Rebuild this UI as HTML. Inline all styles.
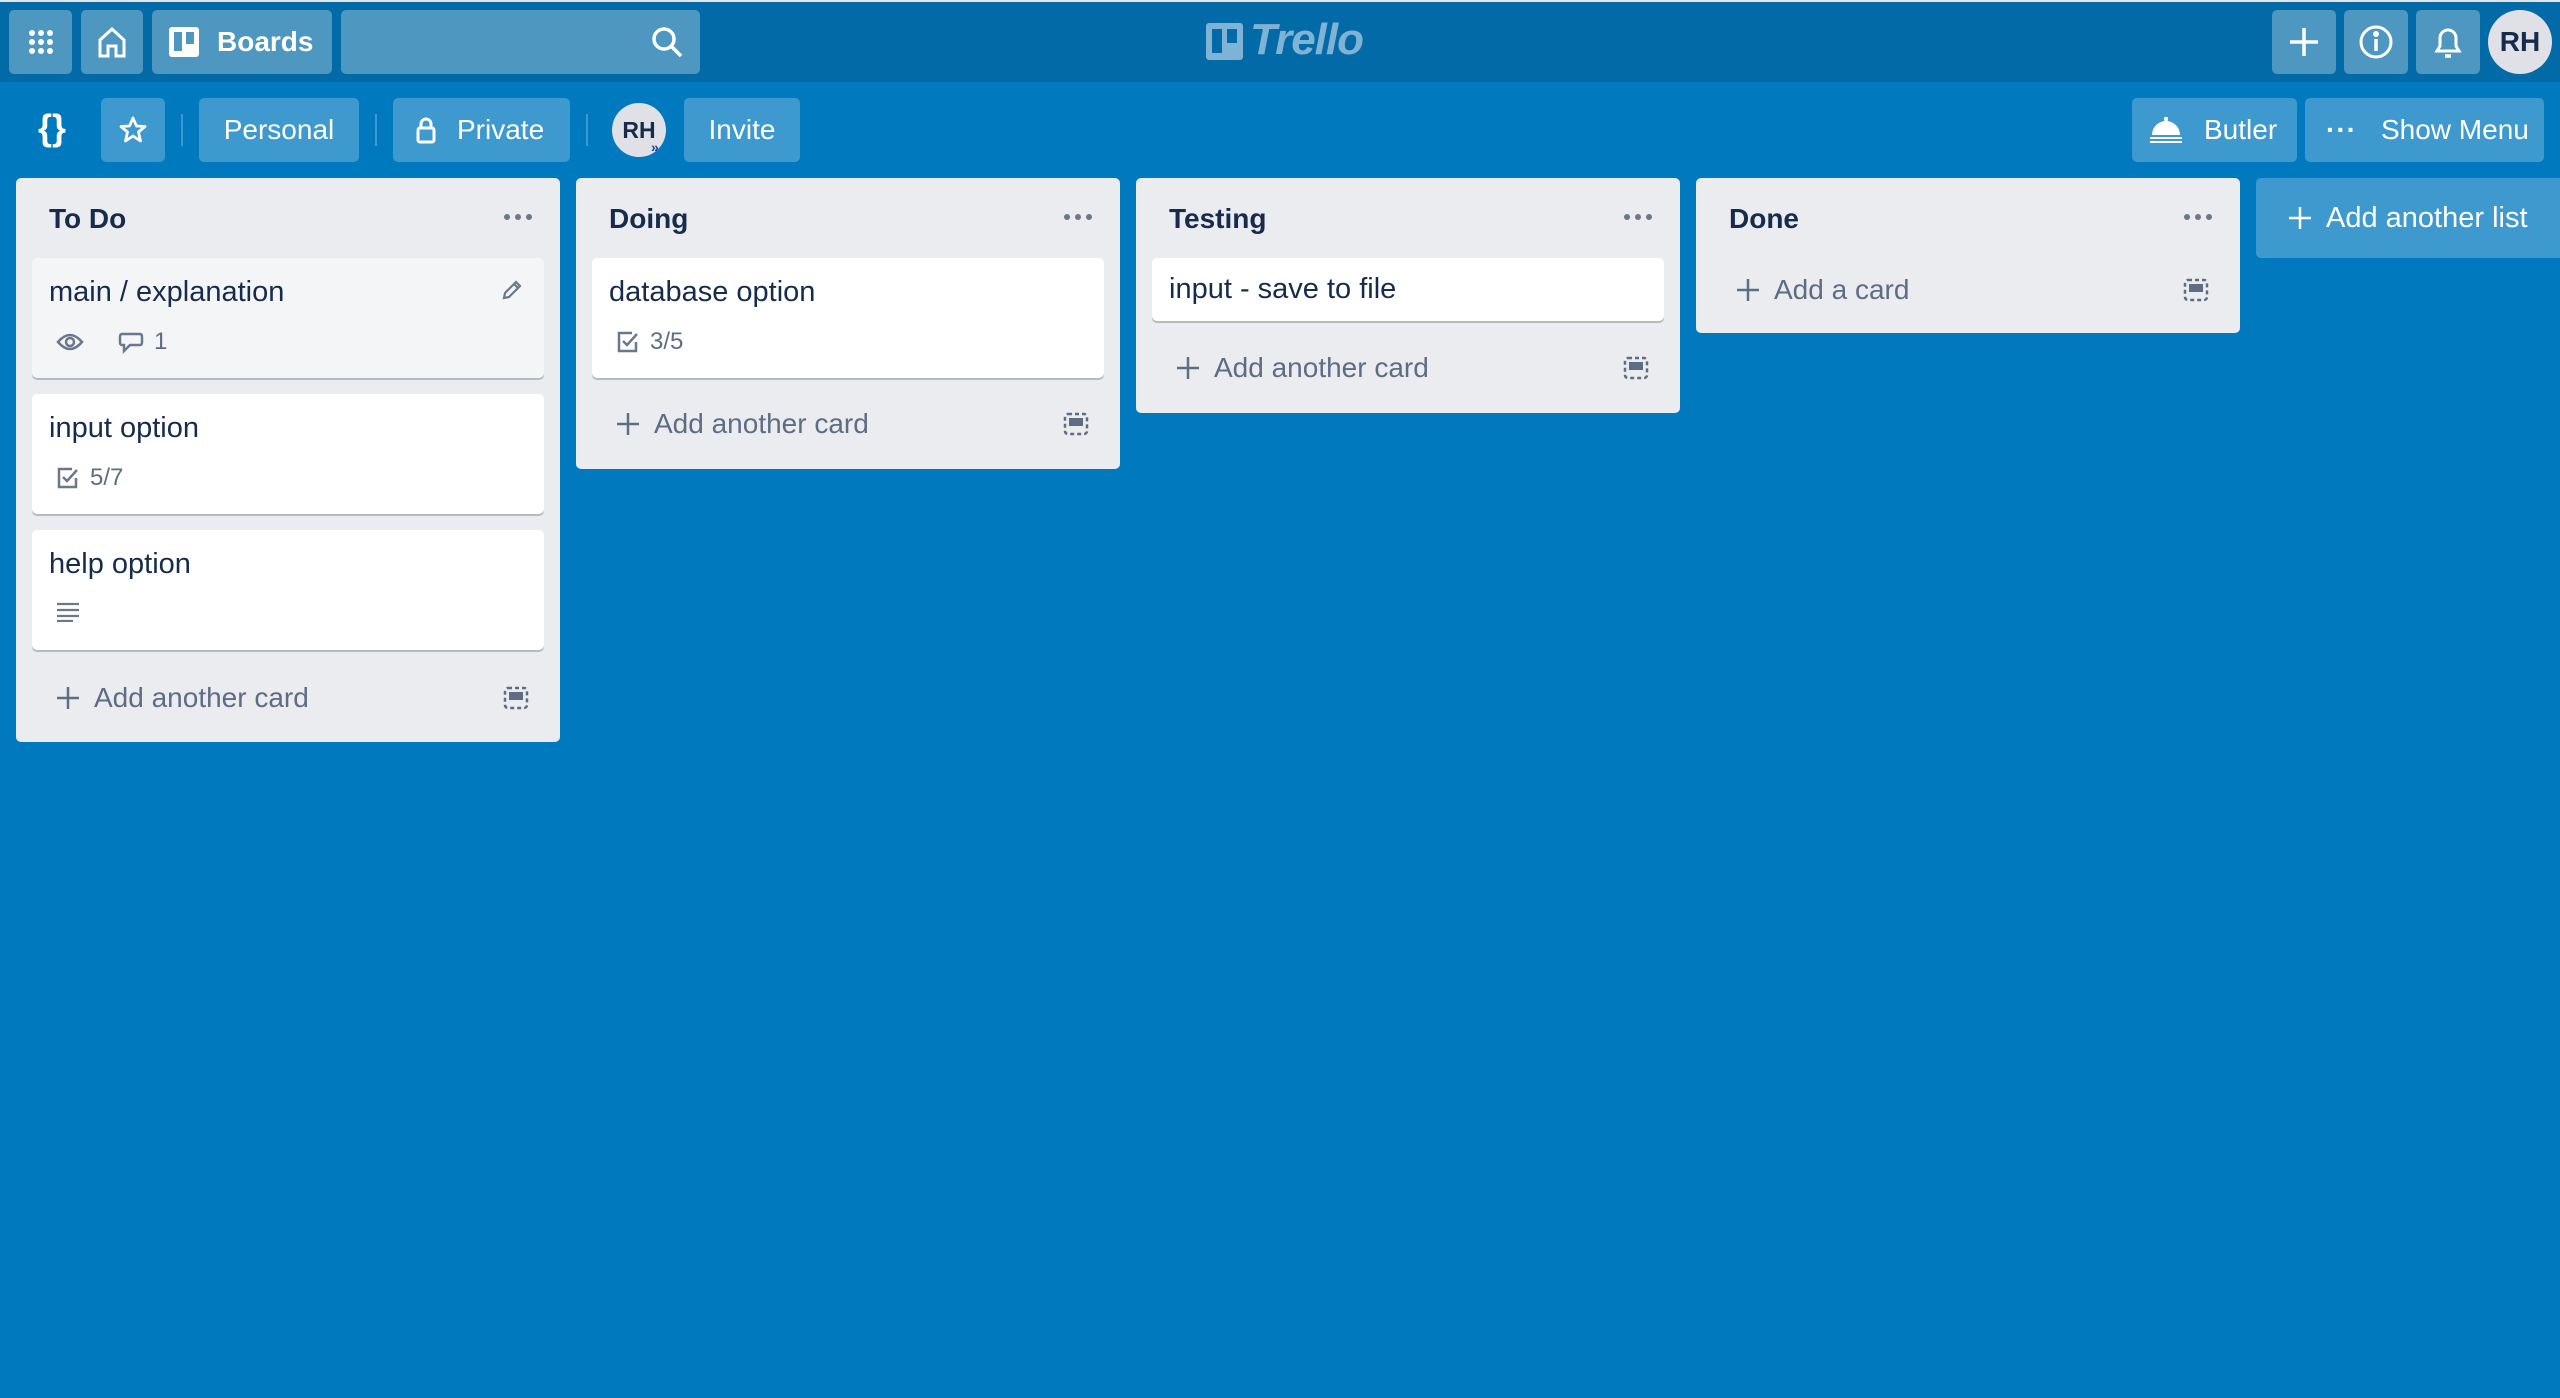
<!DOCTYPE html>
<html><head><meta charset="utf-8"><style>
*{box-sizing:border-box;margin:0;padding:0}
body{width:2560px;height:1398px;background:#0079bf;font-family:"Liberation Sans",sans-serif;position:relative;overflow:hidden;color:#172b4d}
.a{position:absolute}
.top{left:0;top:0;width:2560px;height:82px;background:#026aa7;border-top:2px solid #e2e4e6}
.hb{position:absolute;top:10px;height:64px;background:rgba(255,255,255,.3);border-radius:5px;color:#fff;display:flex;align-items:center;justify-content:center}
.bb{position:absolute;top:98px;height:64px;background:rgba(255,255,255,.24);border-radius:5px;color:#fff;display:flex;align-items:center;font-size:28px}
.sep{position:absolute;top:114px;width:2px;height:32px;background:rgba(255,255,255,.24)}
.list{position:absolute;top:178px;width:544px;background:#ebecf0;border-radius:5px}
.lt{position:absolute;left:33px;top:25px;font-size:28px;font-weight:bold;color:#172b4d}
.dots{position:absolute;right:28px;top:36px;display:flex;gap:5px}
.dots i{width:6px;height:6px;border-radius:50%;background:#6b778c;display:block}
.card{position:absolute;left:16px;width:512px;background:#fff;border-radius:5px;box-shadow:0 2px 0 #b3bac5}
.ct{position:absolute;left:17px;top:18px;font-size:29px;color:#172b4d}
.badge{position:absolute;left:24px;font-size:24px;color:#5e6c84;display:flex;align-items:center;gap:10px}
.add{position:absolute;left:40px;font-size:28px;color:#5e6c84;display:flex;align-items:center;gap:14px}
.tpl{position:absolute;right:31px}
</style></head><body>
<div class="a top"></div>
<div class="hb" style="left:9px;width:63px"><svg width="28" height="28" viewBox="0 0 28 28" fill="#fff"><circle cx="5" cy="5" r="3"/><circle cx="14" cy="5" r="3"/><circle cx="23" cy="5" r="3"/><circle cx="5" cy="14" r="3"/><circle cx="14" cy="14" r="3"/><circle cx="23" cy="14" r="3"/><circle cx="5" cy="23" r="3"/><circle cx="14" cy="23" r="3"/><circle cx="23" cy="23" r="3"/></svg></div>
<div class="hb" style="left:81px;width:62px"><svg width="30" height="32" viewBox="0 0 30 32" fill="none" stroke="#fff" stroke-width="3"><path d="M3 14 L15 3 L27 14 V30 H19 V20 H11 V30 H3 Z"/></svg></div>
<div class="hb" style="left:152px;width:180px;justify-content:flex-start;padding-left:17px;gap:18px;font-size:28px;font-weight:bold"><svg width="30" height="30" viewBox="0 0 30 30"><rect width="30" height="30" rx="3" fill="#fff"/><rect x="5" y="5" width="8" height="19" fill="#4d97c1"/><rect x="17" y="5" width="8" height="12" fill="#4d97c1"/></svg>Boards</div>
<div class="hb" style="left:341px;width:359px;justify-content:flex-end;padding-right:16px"><svg width="34" height="34" viewBox="0 0 34 34" fill="none" stroke="#fff" stroke-width="3.5"><circle cx="14" cy="14" r="10"/><path d="M21 21 L31 31"/></svg></div>
<div class="a" style="left:1206px;top:23px;width:37px;height:37px;background:#7fb3d5;border-radius:3px"><div class="a" style="left:6px;top:6px;width:10px;height:24px;background:#026aa7"></div><div class="a" style="left:21px;top:6px;width:10px;height:14px;background:#026aa7"></div></div>
<div class="a" style="left:1250px;top:15px;font-family:'Liberation Sans',sans-serif;font-style:italic;font-weight:bold;font-size:44px;color:#7fb3d5;letter-spacing:-1px">Trello</div>
<div class="hb" style="left:2272px;width:64px"><svg width="32" height="32" viewBox="0 0 32 32" stroke="#fff" stroke-width="3.5"><path d="M16 2V30M2 16H30"/></svg></div>
<div class="hb" style="left:2344px;width:64px"><svg width="36" height="36" viewBox="0 0 36 36" fill="none" stroke="#fff" stroke-width="3"><circle cx="18" cy="18" r="15"/><path d="M18 15V27" stroke-width="3.5"/><circle cx="18" cy="10" r="1.5" fill="#fff"/></svg></div>
<div class="hb" style="left:2416px;width:64px"><svg width="30" height="36" viewBox="0 0 30 36" fill="none" stroke="#fff" stroke-width="3"><path d="M4 27 H26 L23 22 V14 A8 8 0 0 0 7 14 V22 Z"/><path d="M12 32 H18" stroke-width="3.5"/></svg></div>
<div class="a" style="left:2488px;top:10px;width:64px;height:64px;border-radius:50%;background:#dfe1e6;color:#172b4d;font-weight:bold;font-size:28px;display:flex;align-items:center;justify-content:center">RH</div>

<div class="a" style="left:38px;top:107px;color:#fff;font-size:36px;font-weight:bold">{}</div>
<div class="bb" style="left:101px;width:64px;justify-content:center"><svg width="30" height="30" viewBox="0 0 30 30" fill="none" stroke="#fff" stroke-width="2.8" stroke-linejoin="round"><path d="M15 3 L18.5 11 L27 11.5 L20.5 17 L22.5 26 L15 21 L7.5 26 L9.5 17 L3 11.5 L11.5 11 Z"/></svg></div>
<div class="sep" style="left:181px"></div>
<div class="bb" style="left:199px;width:160px;justify-content:center">Personal</div>
<div class="sep" style="left:375px"></div>
<div class="bb" style="left:393px;width:177px;padding-left:22px;gap:20px"><svg width="22" height="28" viewBox="0 0 22 28" fill="none" stroke="#fff" stroke-width="3"><rect x="3" y="12" width="16" height="14" rx="2"/><path d="M6 12V8a5 5 0 0 1 10 0v4"/></svg>Private</div>
<div class="sep" style="left:586px"></div>
<div class="a" style="left:612px;top:103px;width:54px;height:54px;border-radius:50%;background:#dfe1e6;color:#172b4d;font-weight:bold;font-size:23px;display:flex;align-items:center;justify-content:center">RH</div>
<div class="a" style="left:651px;top:139px;color:#2b3b9f;font-size:14px;font-weight:bold">»</div>
<div class="bb" style="left:684px;width:116px;justify-content:center">Invite</div>
<div class="bb" style="left:2132px;width:165px;padding-left:18px;gap:22px"><svg width="32" height="26" viewBox="0 0 32 26" fill="#fff"><rect x="14" y="0" width="4" height="4" rx="1"/><path d="M2 18 A14 14 0 0 1 30 18 Z"/><rect x="0" y="20" width="32" height="2"/><rect x="0" y="24" width="32" height="2"/></svg>Butler</div>
<div class="bb" style="left:2305px;width:239px;padding-left:21px;gap:24px"><span style="letter-spacing:1px;font-weight:bold">···</span>Show Menu</div>

<div class="list" style="left:16px;height:564px">
 <div class="lt">To Do</div><div class="dots"><i></i><i></i><i></i></div>
 <div class="card" style="top:80px;height:120px;background:#f4f5f7"><div class="ct">main / explanation</div>
  <svg class="a" style="right:20px;top:20px" width="24" height="24" viewBox="0 0 24 24" fill="none" stroke="#6b778c" stroke-width="2.2"><path d="M4 20 L5 15 L16 4 L20 8 L9 19 Z M14 6 L18 10"/></svg>
  <div class="badge" style="top:70px"><svg width="28" height="20" viewBox="0 0 28 20" fill="none" stroke="#6b778c" stroke-width="2.5"><path d="M2 10 Q14 -4 26 10 Q14 24 2 10 Z"/><circle cx="14" cy="10" r="4"/></svg><span style="width:14px"></span><svg width="26" height="24" viewBox="0 0 26 24" fill="none" stroke="#6b778c" stroke-width="2.5"><path d="M4 4 H22 Q24 4 24 7 V12 Q24 15 22 15 H12 L6 21 V15 H4 Q2 15 2 12 V7 Q2 4 4 4 Z"/></svg><span>1</span></div></div>
 <div class="card" style="top:216px;height:120px"><div class="ct">input option</div>
  <div class="badge" style="top:70px"><svg width="24" height="24" viewBox="0 0 24 24" fill="none" stroke="#6b778c" stroke-width="2.5"><path d="M20 12 V21 H3 V3 H16"/><path d="M7 11 L11 15 L21 4"/></svg><span>5/7</span></div></div>
 <div class="card" style="top:352px;height:120px"><div class="ct">help option</div>
  <div class="badge" style="top:72px"><svg width="24" height="20" viewBox="0 0 24 20" stroke="#6b778c" stroke-width="2.2"><path d="M1 2H23M1 8H23M1 14H23M1 19H17"/></svg></div></div>
 <div class="add" style="top:504px"><svg width="24" height="24" viewBox="0 0 24 24" stroke="#5e6c84" stroke-width="2.5"><path d="M12 1V23M1 12H23"/></svg>Add another card</div>
 <svg class="tpl" style="top:508px" width="26" height="24" viewBox="0 0 26 24" fill="none" stroke="#5e6c84" stroke-width="2.5"><rect x="2" y="2" width="22" height="20" rx="3" stroke-dasharray="4 3"/><rect x="6" y="6" width="14" height="8" fill="#5e6c84" stroke="none"/></svg>
</div>

<div class="list" style="left:576px;height:291px">
 <div class="lt">Doing</div><div class="dots"><i></i><i></i><i></i></div>
 <div class="card" style="top:80px;height:120px"><div class="ct">database option</div>
  <div class="badge" style="top:70px"><svg width="24" height="24" viewBox="0 0 24 24" fill="none" stroke="#6b778c" stroke-width="2.5"><path d="M20 12 V21 H3 V3 H16"/><path d="M7 11 L11 15 L21 4"/></svg><span>3/5</span></div></div>
 <div class="add" style="top:230px"><svg width="24" height="24" viewBox="0 0 24 24" stroke="#5e6c84" stroke-width="2.5"><path d="M12 1V23M1 12H23"/></svg>Add another card</div>
 <svg class="tpl" style="top:234px" width="26" height="24" viewBox="0 0 26 24" fill="none" stroke="#5e6c84" stroke-width="2.5"><rect x="2" y="2" width="22" height="20" rx="3" stroke-dasharray="4 3"/><rect x="6" y="6" width="14" height="8" fill="#5e6c84" stroke="none"/></svg>
</div>

<div class="list" style="left:1136px;height:235px">
 <div class="lt">Testing</div><div class="dots"><i></i><i></i><i></i></div>
 <div class="card" style="top:80px;height:63px"><div class="ct" style="top:15px">input - save to file</div></div>
 <div class="add" style="top:174px"><svg width="24" height="24" viewBox="0 0 24 24" stroke="#5e6c84" stroke-width="2.5"><path d="M12 1V23M1 12H23"/></svg>Add another card</div>
 <svg class="tpl" style="top:178px" width="26" height="24" viewBox="0 0 26 24" fill="none" stroke="#5e6c84" stroke-width="2.5"><rect x="2" y="2" width="22" height="20" rx="3" stroke-dasharray="4 3"/><rect x="6" y="6" width="14" height="8" fill="#5e6c84" stroke="none"/></svg>
</div>

<div class="list" style="left:1696px;height:155px">
 <div class="lt">Done</div><div class="dots"><i></i><i></i><i></i></div>
 <div class="add" style="top:96px"><svg width="24" height="24" viewBox="0 0 24 24" stroke="#5e6c84" stroke-width="2.5"><path d="M12 1V23M1 12H23"/></svg>Add a card</div>
 <svg class="tpl" style="top:100px" width="26" height="24" viewBox="0 0 26 24" fill="none" stroke="#5e6c84" stroke-width="2.5"><rect x="2" y="2" width="22" height="20" rx="3" stroke-dasharray="4 3"/><rect x="6" y="6" width="14" height="8" fill="#5e6c84" stroke="none"/></svg>
</div>

<div class="a" style="left:2256px;top:178px;width:320px;height:80px;background:rgba(255,255,255,.24);border-radius:5px;color:#fff;font-size:29px;display:flex;align-items:center;padding-left:32px;gap:14px"><svg width="24" height="24" viewBox="0 0 24 24" stroke="#fff" stroke-width="2.5"><path d="M12 1V23M1 12H23"/></svg>Add another list</div>
</body></html>
